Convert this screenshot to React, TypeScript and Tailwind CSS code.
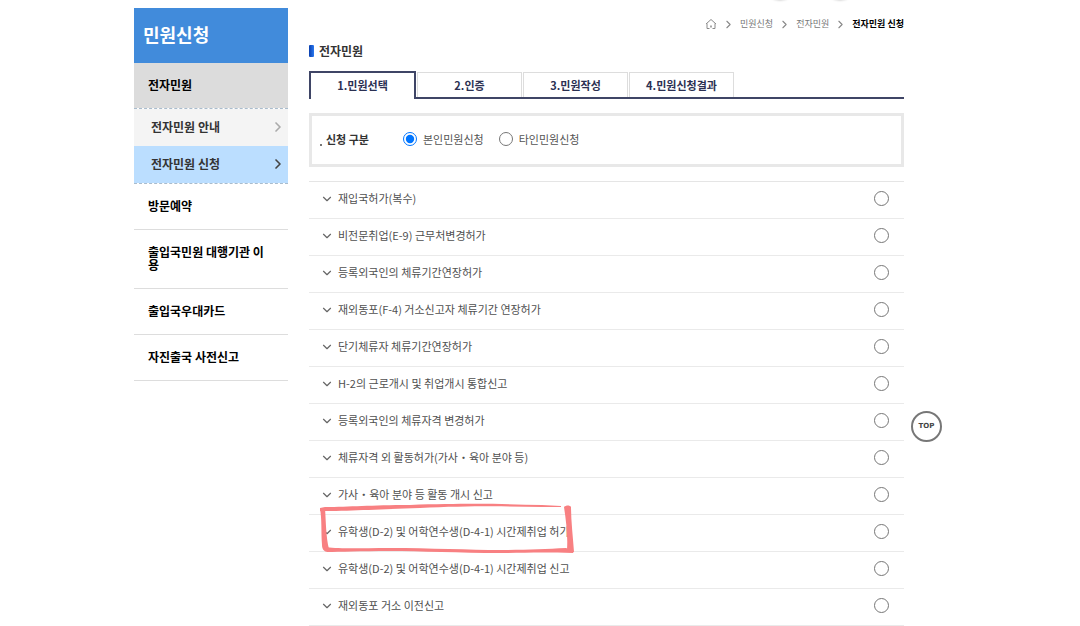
import React, { useState } from 'react';
import { ChevronDown, ChevronRight } from 'lucide-react';

const subMenu = [
  { label: '전자민원 안내', active: false },
  { label: '전자민원 신청', active: true },
];

const sideMenu = ['방문예약', '출입국민원 대행기관 이용', '출입국우대카드', '자진출국 사전신고'];

const steps = ['1.민원선택', '2.인증', '3.민원작성', '4.민원신청결과'];

const services = [
  '재입국허가(복수)',
  '비전문취업(E-9) 근무처변경허가',
  '등록외국인의 체류기간연장허가',
  '재외동포(F-4) 거소신고자 체류기간 연장허가',
  '단기체류자 체류기간연장허가',
  'H-2의 근로개시 및 취업개시 통합신고',
  '등록외국인의 체류자격 변경허가',
  '체류자격 외 활동허가(가사・육아 분야 등)',
  '가사・육아 분야 등 활동 개시 신고',
  '유학생(D-2) 및 어학연수생(D-4-1) 시간제취업 허가',
  '유학생(D-2) 및 어학연수생(D-4-1) 시간제취업 신고',
  '재외동포 거소 이전신고',
];

const MARKED_SERVICE = 9;

const HomeIcon = () => (
  <svg viewBox="0 0 12 12" className="h-3 w-3" fill="none" stroke="#8a8a8a" strokeWidth="1">
    <path d="M1 6 L6 1.5 L11 6 M2 5.5 V10.5 H4.5 M7.5 10.5 H10 V5.5" />
    <path d="M6 7.5 V9.5" strokeWidth="1.5" />
  </svg>
);

// Hand drawn marker around one row
const MarkerBox = () => (
  <svg
    viewBox="0 0 256 50"
    className="pointer-events-none absolute -top-3 left-[11px] h-[50px] w-[256px]"
    fill="#f88082"
  >
    <path d="M0 5 L5 4 C30 4 50 2 90 2 C150 0 185 1 222 2 L241 3 L241 4 L222 4 C180 3 145 3 100 5 C60 6 35 8 5 8 L0 8 Z" />
    <path d="M0 6 L5 5 C6 20 6 34 9 46 L8 49 C4 49 2 46 2 42 C1 28 2 16 0 6 Z" />
    <path d="M5 44 C15 46 40 45 70 45 C110 45 150 47 180 47 C205 47 225 46 246 45 L254 48 L253 50 C220 49 200 50 180 50 C140 50 100 48 70 48 C40 48 20 49 7 49 Z" />
    <path d="M244 4 C246 2 250 2 251 4 C251 18 253 34 254 49 L247 47 C248 32 246 18 244 4 Z" />
  </svg>
);

const Sidebar: React.FC = () => (
  <aside className="w-[154px] flex-shrink-0 pt-2 font-bold">
    <h2 className="flex h-[55px] items-center bg-[#418bdb] px-[9px] pb-[3px] text-[18px] text-white">
      민원신청
    </h2>
    <a href="#" className="flex h-[45px] items-center bg-[#dcdcdc] px-[14px] pb-[2px] text-xs text-black">
      전자민원
    </a>
    <ul className="border-y border-dashed border-[#a9bccd] text-xs text-[#333]">
      {subMenu.map((item) => (
        <li key={item.label}>
          <a
            href="#"
            className={`flex h-[37px] items-center justify-between pr-[2px] pb-[2px] pl-[17px] ${
              item.active ? 'bg-[#bbdeff]' : 'bg-[#f4f4f4]'
            }`}
          >
            {item.label}
            <ChevronRight
              size={16}
              strokeWidth={2.5}
              className={item.active ? 'text-[#444]' : 'text-[#aaa]'}
            />
          </a>
        </li>
      ))}
    </ul>
    <ul className="text-xs leading-[13px] text-black">
      {sideMenu.map((label) => (
        <li key={label} className="border-b border-[#ddd]">
          <a href="#" className="block break-all px-[14px] pt-[15px] pb-[17px]">
            {label}
          </a>
        </li>
      ))}
    </ul>
  </aside>
);

const Breadcrumb: React.FC = () => (
  <nav className="flex h-12 items-center justify-end gap-[5px] text-[9px] text-[#777]">
    <a href="#" aria-label="홈">
      <HomeIcon />
    </a>
    <ChevronRight size={13} className="text-[#888]" />
    <a href="#">민원신청</a>
    <ChevronRight size={13} className="text-[#888]" />
    <a href="#">전자민원</a>
    <ChevronRight size={13} className="text-[#888]" />
    <span className="font-bold text-black">전자민원 신청</span>
  </nav>
);

const App: React.FC = () => {
  const [applicant, setApplicant] = useState('self');
  const [service, setService] = useState<number | null>(null);

  return (
    <div className="min-h-screen overflow-hidden bg-white font-['Noto_Sans_CJK_KR',sans-serif]">
      <div className="relative mx-auto flex max-w-[812px] items-start">
        {/* Lower shadows of the round header buttons */}
        <span className="absolute -top-8 right-[150px] h-8 w-8 rounded-full shadow-[0_1px_2px_rgba(0,0,0,0.15)]" />
        <span className="absolute -top-8 right-[90px] h-8 w-8 rounded-full shadow-[0_1px_2px_rgba(0,0,0,0.15)]" />

        <Sidebar />

        <main className="ml-[21px] min-w-0 flex-1">
          <Breadcrumb />

          <h1 className="flex h-[23px] items-start gap-[5px] text-xs leading-[6px] font-bold text-[#333]">
            <span className="-mt-[3px] h-3 w-[5px] rounded-[1px] bg-linear-to-r from-[#0b3fae] to-[#2a78f0]" />
            전자민원
          </h1>

          <div className="flex h-7 items-end gap-[1px] border-b-2 border-[#3f4566] text-[11px] font-bold text-[#2b3052]">
            {steps.map((step, i) => (
              <button
                key={step}
                className={
                  i === 0
                    ? '-mb-[2px] h-7 w-[107px] border-2 border-b-0 border-[#3f4566] bg-white pb-[2px]'
                    : 'h-[25px] w-[105px] border border-b-0 border-[#ddd]'
                }
              >
                {step}
              </button>
            ))}
          </div>

          <div className="mt-[14px] flex h-[54px] items-center border-[3px] border-[#e8e8e8] pb-[2px] pl-2 text-[11px] text-[#555]">
            <span className="mt-3 mr-[4px] h-[2px] w-[2px] bg-[#777]" />
            <span className="w-[77px] font-bold text-[#333]">신청 구분</span>
            <label className="mr-[15px] flex items-center gap-[6px]">
              <input
                type="radio"
                name="applicant"
                className="h-[14px] w-[14px]"
                checked={applicant === 'self'}
                onChange={() => setApplicant('self')}
              />
              본인민원신청
            </label>
            <label className="flex items-center gap-[6px]">
              <input
                type="radio"
                name="applicant"
                className="h-[14px] w-[14px]"
                checked={applicant === 'other'}
                onChange={() => setApplicant('other')}
              />
              타인민원신청
            </label>
          </div>

          <ul className="mt-[14px] border-t border-[#e5e5e5] text-[11px] text-[#505050]">
            {services.map((name, i) => (
              <li
                key={name}
                className="relative flex h-[37px] items-center border-b border-[#eaeaea] pr-[15px] pb-[3px] pl-[11px]"
              >
                <ChevronDown size={14} className="mr-[4px] text-[#666]" />
                <label htmlFor={`service-${i}`} className="flex-1">
                  {name}
                </label>
                <input
                  id={`service-${i}`}
                  type="radio"
                  name="service"
                  className="h-[15px] w-[15px]"
                  checked={service === i}
                  onChange={() => setService(i)}
                />
                {i === MARKED_SERVICE && <MarkerBox />}
              </li>
            ))}
          </ul>
        </main>

        <button className="mt-[411px] mr-1 ml-[7px] h-[31px] w-[31px] flex-shrink-0 rounded-full border-2 border-[#777] font-['DejaVu_Sans',sans-serif] text-[7px] font-bold text-[#444]">
          TOP
        </button>
      </div>
    </div>
  );
};

export default App;
